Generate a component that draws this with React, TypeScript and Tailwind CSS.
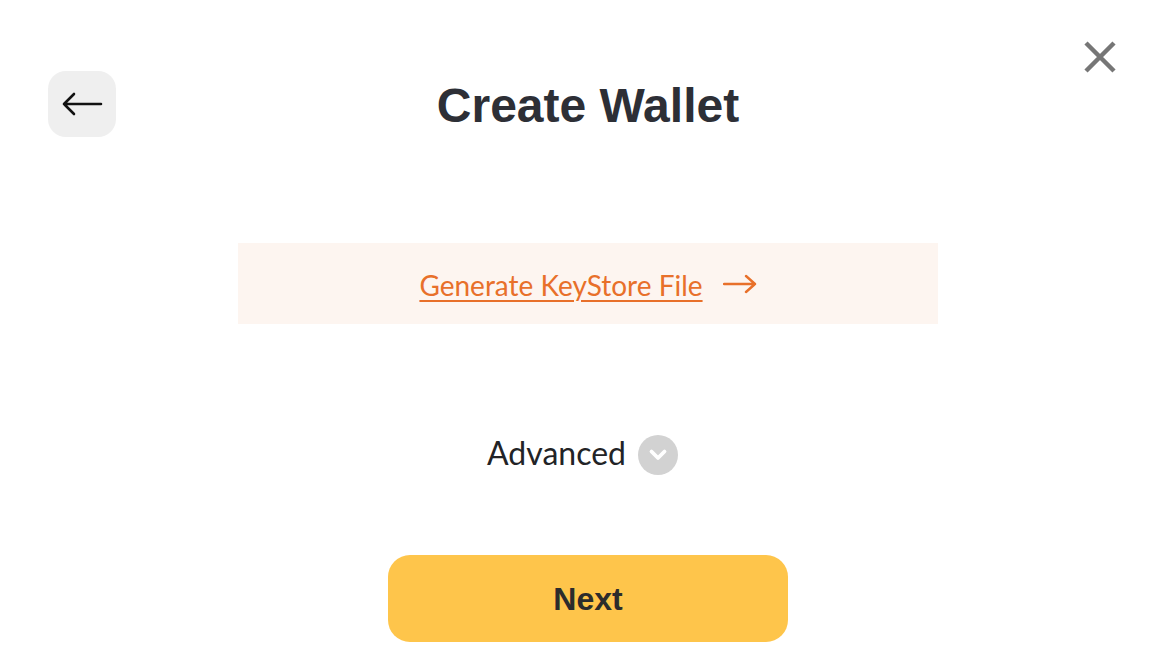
import { ReactNode } from 'react';

function IconButton({ children }: { children: ReactNode }) {
  return (
    <button className="w-[68px] h-[66px] rounded-[18px] bg-[#efefef] flex items-center justify-center">
      {children}
    </button>
  );
}

export default function App() {
  return (
    <div className="relative w-full h-[658px] bg-white overflow-hidden font-['Liberation_Sans',sans-serif]">
      <button className="absolute top-[40px] right-[49px] w-[34px] h-[34px] flex items-center justify-center">
        <svg width="34" height="34" viewBox="0 0 34 34">
          <path d="M3 3 L31 31 M31 3 L3 31" stroke="#767676" strokeWidth="4.5" strokeLinecap="butt" />
        </svg>
      </button>

      <div className="ml-[10px] flex flex-col items-center">
        <div className="w-full grid grid-cols-[1fr_auto_1fr] items-center mt-[71px]">
          <div className="pl-[38px]">
            <IconButton>
              <svg width="42" height="24" viewBox="0 0 42 24">
                <path d="M40 12 H3 M13 2 L3 12 L13 22" stroke="#111" strokeWidth="2.6" fill="none" strokeLinecap="round" strokeLinejoin="round" />
              </svg>
            </IconButton>
          </div>
          <h1 className="text-[48px] font-bold text-[#2d2f36] leading-none pt-[4px]">Create Wallet</h1>
          <div />
        </div>

        <div className="mt-[106px] w-[700px] h-[81px] bg-[#fdf5f0] flex items-center justify-center gap-[20px] font-['Lato',sans-serif]">
          <a href="#" className="text-[28px] text-[#e8702a] underline underline-offset-[4px] decoration-[2px] pt-[3px]">
            Generate KeyStore File
          </a>
          <svg width="34" height="20" viewBox="0 0 34 20" className="mt-[1px]">
            <path d="M1 10 H32 M23 2 L32 10 L23 18" stroke="#e8702a" strokeWidth="2.4" fill="none" strokeLinecap="round" strokeLinejoin="round" />
          </svg>
        </div>

        <div className="mt-[111px] mr-[11px] flex items-center gap-[12px] font-['Lato',sans-serif]">
          <span className="text-[32px] text-[#222326] leading-none pb-[4px]">Advanced</span>
          <span className="w-[40px] h-[40px] rounded-full bg-[#d2d2d2] flex items-center justify-center">
            <svg width="20" height="14" viewBox="0 0 20 14" className="-mt-[1px]">
              <path d="M3.5 3.5 L10 10 L16.5 3.5" stroke="#fff" strokeWidth="3.8" fill="none" strokeLinecap="round" strokeLinejoin="round" />
            </svg>
          </span>
        </div>

        <button className="mt-[80px] w-[400px] h-[87px] rounded-[22px] bg-[#fec54b] text-[32px] font-bold text-[#2c2c2c]">
          Next
        </button>
      </div>
    </div>
  );
}
